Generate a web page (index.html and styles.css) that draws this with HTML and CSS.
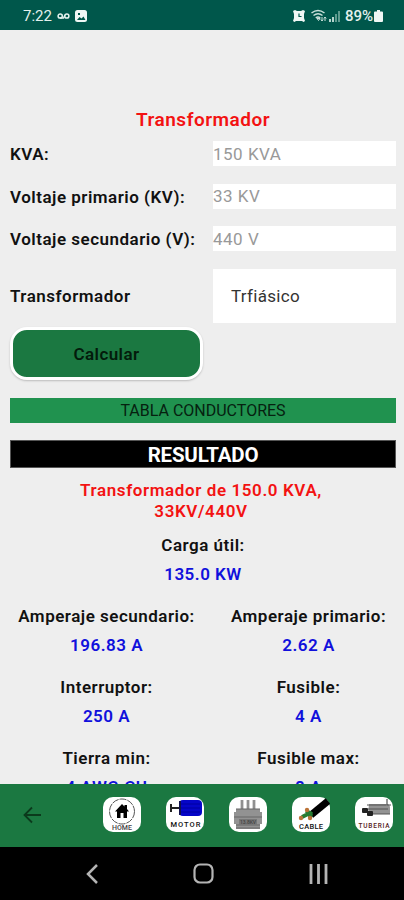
FILE: index.html
```html
<!DOCTYPE html>
<html lang="es">
<head>
  <meta charset="UTF-8" />
  <meta name="viewport" content="width=device-width, initial-scale=1.0"/>
  <title>Transformador</title>
  <link rel="stylesheet" href="styles.css">
</head>
<body>
  <header class="status-bar">
    <span class="time">7:22</span>
    <svg class="voicemail" width="13" height="8" viewBox="0 0 13 8" fill="none" stroke="#e4f1ed" stroke-width="1.5"><circle cx="3.2" cy="4" r="2.1"/><circle cx="9.8" cy="4" r="2.1"/><path d="M3 6.1h3.5L8 3"/></svg>
    <svg width="12" height="12" viewBox="0 0 12 12"><rect width="12" height="12" rx="2.5" fill="#f0f7f5"/><path d="M2 10l2.5-3 2 1.6 2-2.2L10.5 10zM3 3h2v2H3z" fill="#00574b"/></svg>
    <svg class="alarm" width="12" height="12" viewBox="0 0 12 12"><path d="M0 1l2-1 2 1h4l2-1 2 1-1 3v4l1 3-1.500 1-1.500-1H3l-1.500 1L0 11l1-3V4z" fill="#f0f7f5"/><path d="M6 3.500v3h2.500" fill="none" stroke="#00574b" stroke-width="1.200"/></svg>
    <svg class="wifi" width="16" height="13" viewBox="0 0 16 13" fill="none" stroke="#c9e0da" stroke-width="1.500"><path d="M.5 4Q7 -1 13.500 4M2.500 6.500Q7 3 11.500 6.500M4.800 9Q7 7 9.200 9"/><path d="M6 9.500l1.500 2L9 9.500zM11 8v4M9.800 10.500L11 12l1.200-1.500M14 12V8M12.800 9.500L14 8l1.200 1.500" stroke-width="1"/></svg>
    <svg class="signal" width="11" height="12" viewBox="0 0 11 12"><path d="M0 9h2v3H0zM3 7h2v5H3z" fill="#b5d3cc"/><path d="M6 4h2v8H6zM9 1h2v11H9z" fill="#5f9b8f"/></svg>
    <span class="battery">89%</span>
    <svg width="9" height="12" viewBox="0 0 9 12"><path d="M3 0h3v1.500h2q1 0 1 1V11q0 1-1 1H1q-1 0-1-1V2.500q0-1 1-1h2z" fill="#f0f7f5"/></svg>
  </header>

  <main class="content">
    <h1>Transformador</h1>

    <form class="form">
      <label for="kva">KVA:</label>
      <input type="text" id="kva" placeholder="150 KVA" />

      <label for="primario">Voltaje primario (KV):</label>
      <input type="text" id="primario" placeholder="33 KV" />

      <label for="secundario">Voltaje secundario (V):</label>
      <input type="text" id="secundario" placeholder="440 V" />

      <span class="label">Transformador</span>
      <div class="picker">Trfiásico</div>

      <button type="button" class="calcular">Calcular</button>
    </form>

    <div class="tabla">TABLA CONDUCTORES</div>
    <h2>RESULTADO</h2>
    <p class="resumen">Transformador de 150.0 KVA,<br>33KV/440V</p>

    <div class="result carga"><span>Carga útil:</span><b>135.0 KW</b></div>
    <div class="results">
      <div class="result"><span>Amperaje secundario:</span><b>196.83 A</b></div>
      <div class="result"><span>Amperaje primario:</span><b>2.62 A</b></div>
      <div class="result"><span>Interruptor:</span><b>250 A</b></div>
      <div class="result"><span>Fusible:</span><b>4 A</b></div>
      <div class="result"><span>Tierra min:</span><b>4 AWG CU</b></div>
      <div class="result"><span>Fusible max:</span><b>8 A</b></div>
    </div>
  </main>

  <nav class="tab-bar">
    <svg class="back" width="19" height="18" viewBox="0 0 19 18" fill="none" stroke="#0b3a1c" stroke-width="1.800"><path d="M18 9H1.500M9 1.500L1.500 9 9 16.500"/></svg>
    <div class="tabs">
      <svg width="38" height="35" viewBox="0 0 38 35">
        <rect width="38" height="35" rx="10" fill="#fff"/>
        <circle cx="19" cy="14.500" r="12.500" fill="none" stroke="#555" stroke-width="1" stroke-dasharray="7 1"/>
        <path d="M12 14.500L19 7l2.500 2.500V8H24v4l2 2.500h-2V21h-3.500v-5h-3v5H14v-6.500z" fill="#000"/>
        <text x="19" y="33" font-size="7" textLength="20" fill="#444">HOME</text>
      </svg>
      <svg width="38" height="35" viewBox="0 0 38 35">
        <rect width="38" height="35" rx="10" fill="#fff"/>
        <path d="M5 7v8M5 11h8" fill="none" stroke="#222" stroke-width="2"/>
        <rect x="13" y="3" width="23" height="16" rx="4" fill="#0505c8"/>
        <path d="M15 7h19M15 11h19M15 15h19" stroke="#0000a0" stroke-width="1"/>
        <rect x="13" y="4" width="2" height="14" fill="#11114c"/>
        <text x="19.500" y="30" font-size="7.500" textLength="30" fill="#111">MOTOR</text>
      </svg>
      <svg width="38" height="35" viewBox="0 0 38 35">
        <rect width="38" height="35" rx="10" fill="#fff"/>
        <path d="M13 3v9M19 3v9M25 3v9" stroke="#aaa" stroke-width="3"/>
        <path d="M13 3v9M19 3v9M25 3v9" stroke="#777" stroke-width="1"/>
        <path d="M7 12h24v3h2v12h-2v5H7v-5H5V15h2z" fill="#929292"/>
        <path d="M7 12h24M5 20h28M7 28h24M7 31h24" stroke="#666"/>
        <rect x="10" y="22" width="18" height="6" fill="#777"/>
        <text x="19" y="27" font-size="5" textLength="16" fill="#444">13.8KV</text>
      </svg>
      <svg width="38" height="35" viewBox="0 0 38 35">
        <rect width="38" height="35" rx="10" fill="#fff"/>
        <path d="M19 18L36 4" stroke="#000" stroke-width="7"/>
        <path d="M10 20l8-4M14 14l6 3M19 16l-1 5" stroke="#277b32" stroke-width="4"/>
        <circle cx="15" cy="13" r="2.200" fill="#bb7338"/><circle cx="9" cy="21" r="2.200" fill="#bb7338"/><circle cx="18" cy="21" r="2.200" fill="#bb7338"/>
        <text x="19" y="32" font-size="7.500" textLength="24" fill="#111">CABLE</text>
      </svg>
      <svg width="38" height="35" viewBox="0 0 38 35">
        <rect width="38" height="35" rx="10" fill="#fff"/>
        <path d="M14 7h18q3 0 3 4v6H13z" fill="#939393"/>
        <path d="M12 8h19M13 12h20M15 17h20M32 2v6h4" fill="none" stroke="#555" stroke-width="1.200"/>
        <rect x="7" y="11" width="6" height="5" rx="1" fill="#222"/><rect x="12" y="14" width="6" height="5" rx="1" fill="#222"/>
        <text x="19" y="31" font-size="6.500" textLength="31" fill="#522">TUBERIA</text>
      </svg>
    </div>
  </nav>

  <footer class="system-bar">
    <svg width="12" height="20" viewBox="0 0 12 20" fill="none" stroke="#b4b4b4" stroke-width="2.500"><path d="M11 1L2 10l9 9"/></svg>
    <svg width="21" height="21" viewBox="0 0 21 21" fill="none" stroke="#b4b4b4" stroke-width="2.200"><rect x="1.500" y="1.500" width="18" height="18" rx="5.500"/></svg>
    <svg width="19" height="20" viewBox="0 0 19 20" stroke="#b4b4b4" stroke-width="2.800"><path d="M2 0v20M9.500 0v20M17 0v20"/></svg>
  </footer>
</body>
</html>
```
FILE: styles.css
```css
* {
  box-sizing: border-box;
}
body {
  font-family: Roboto, sans-serif;
  font-size: 17px;
  font-weight: 600;
  letter-spacing: 0.5px;
  color: #111;
  background: #eee;
  display: flex;
  flex-direction: column;
  height: 100vh;
  margin: 0;
  overflow: hidden;
}
.status-bar {
  display: flex;
  align-items: center;
  flex: 0 0 30px;
  padding: 1px 21px 0 23px;
  background: #00574b;
  color: #e4f1ed;
  font-size: 15px;
  font-weight: 400;
  letter-spacing: 0;
}
.voicemail {
  margin: 0 5px 0 5px;
}
.alarm {
  margin-left: auto;
}
.wifi {
  margin: 0 2px 0 6px;
}
.battery {
  margin: 0 1px 0 5px;
  font-weight: 500;
}
.content {
  flex: 1;
  min-height: 0;
  padding: 78px 8px 0 10px;
  overflow: hidden;
}
h1 {
  margin: 0;
  font-size: 19px;
  line-height: 23px;
  font-weight: 600;
  letter-spacing: 0.5px;
  text-align: center;
  color: #f31212;
}
.form {
  display: grid;
  grid-template-columns: 193px 183px;
  grid-template-rows: 25px 25px 25px 54px 53px;
  column-gap: 10px;
  row-gap: 17.5px;
  align-items: center;
  margin-top: 10px;
}
label {
  padding-top: 1px;
  white-space: nowrap;
}
.label {
  padding-top: 1px;
}
input {
  width: 100%;
  height: 25px;
  padding: 0;
  border: none;
  background: #fff;
  font: inherit;
  font-weight: 400;
  letter-spacing: 0.5px;
}
input::placeholder {
  color: #999;
  opacity: 1;
}
.picker {
  height: 54px;
  padding-left: 18px;
  background: #fff;
  font-weight: 400;
  line-height: 55px;
  letter-spacing: 0.3px;
  color: #333;
}
.calcular {
  height: 53px;
  margin-top: -26px;
  border: 3px solid #fff;
  border-radius: 17px;
  background: #1b7841;
  box-shadow: 0 1px 2px #bbb;
  font: inherit;
  letter-spacing: 0.4px;
  color: #031b0b;
}
.tabla {
  height: 25px;
  margin-top: 5px;
  background: #20924f;
  font-size: 16px;
  font-weight: 400;
  line-height: 26px;
  letter-spacing: 0;
  text-align: center;
  color: #06210f;
}
h2 {
  height: 28px;
  margin: 17px 0 0;
  border: 1px solid #555;
  background: #000;
  font-size: 20.5px;
  font-weight: 700;
  line-height: 28px;
  letter-spacing: -0.2px;
  text-align: center;
  color: #fff;
}
.resumen {
  margin: 11.5px 4px 0 0;
  line-height: 21.5px;
  letter-spacing: 0.6px;
  text-align: center;
  color: #f31212;
}
.result {
  display: flex;
  flex-direction: column;
  align-items: center;
  line-height: 28.5px;
  white-space: nowrap;
}
.result b {
  font-weight: 600;
  color: #1010dc;
}
.carga {
  margin-top: 8.5px;
}
.results {
  display: grid;
  grid-template-columns: 193px 175px;
  column-gap: 18px;
  row-gap: 14px;
  margin-top: 14px;
}
.tab-bar {
  display: flex;
  justify-content: space-between;
  align-items: center;
  flex: 0 0 63px;
  padding: 0 11px 2px 23px;
  background: #1b7841;
}
.tabs {
  display: flex;
  gap: 25px;
}
.tabs text {
  font-weight: 500;
  letter-spacing: 0;
  text-anchor: middle;
}
.system-bar {
  display: flex;
  justify-content: space-between;
  align-items: center;
  flex: 0 0 53px;
  padding: 0 76px 0 86px;
  background: #000;
}
```
